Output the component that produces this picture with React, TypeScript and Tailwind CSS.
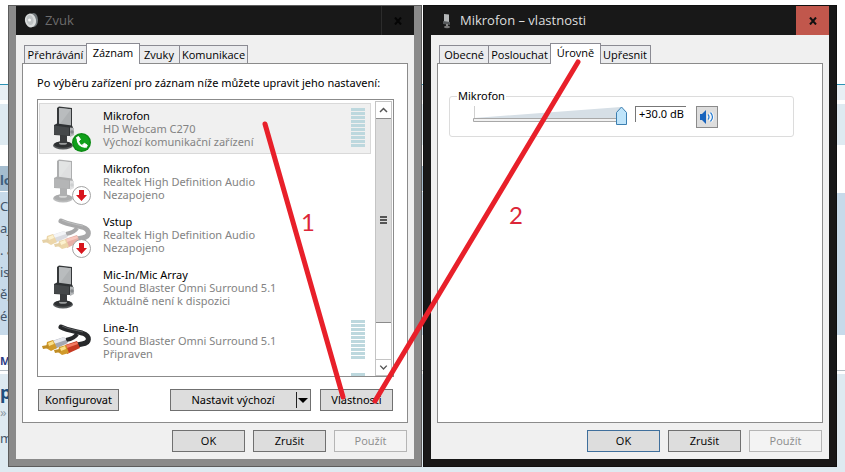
import React from 'react'
import clsx from 'clsx'

type Device = {
    name: string
    driver: string
    status: string
    icon: 'mic' | 'cable'
    badge?: 'phone' | 'down'
    faded?: boolean
    selected?: boolean
    meter?: boolean
}

const devices: Device[] = [
    { name: 'Mikrofon', driver: 'HD Webcam C270', status: 'Výchozí komunikační zařízení', icon: 'mic', badge: 'phone', selected: true, meter: true },
    { name: 'Mikrofon', driver: 'Realtek High Definition Audio', status: 'Nezapojeno', icon: 'mic', badge: 'down', faded: true },
    { name: 'Vstup', driver: 'Realtek High Definition Audio', status: 'Nezapojeno', icon: 'cable', badge: 'down', faded: true },
    { name: 'Mic-In/Mic Array', driver: 'Sound Blaster Omni Surround 5.1', status: 'Aktuálně není k dispozici', icon: 'mic' },
    { name: 'Line-In', driver: 'Sound Blaster Omni Surround 5.1', status: 'Připraven', icon: 'cable', meter: true },
]

const MicDrawing = () => (
    <g>
        <ellipse cx="23" cy="41.500" rx="10" ry="4" fill="#55585a" />
        <ellipse cx="23" cy="40.500" rx="9" ry="3.200" fill="#2e3032" />
        <ellipse cx="23" cy="39.500" rx="4" ry="1.300" fill="#9a9c9d" />
        <path d="M20 31h7v8h-7z" fill="#3a3c3e" />
        <path d="M17 4l2-1.500 13 1.500v21l-2 1-13-2z" fill="#35383a" />
        <path d="M19 4l12 1.200v19l-12-1.700z" fill="#aeb1b3" />
        <path d="M19 4l12 1.200-12 16z" fill="#b9bcbe" />
        <path d="M14 21l3-1.500 15 2 1 2-2 8.500-17-1z" fill="#2f3234" />
        <path d="M14 21.500l15 2v8.500l-15-1.500z" fill="#45484a" />
        <path d="M30 23.500l4 .5v7l-4 2z" fill="#b3b6b8" />
        <circle cx="32" cy="28" r="1.800" fill="#85898c" />
    </g>
)

const CableDrawing = () => (
    <g>
        <path d="M21 11c6 3 13 4 21 6 9 3 8 10 0 11l-5 1" fill="none" stroke="#27292b" strokeWidth="5" strokeLinecap="round" />
        <path d="M37 18c-2 4-6 5-11 6" fill="none" stroke="#27292b" strokeWidth="4" />
        <path d="M22 10c6 3 13 4 21 6" fill="none" stroke="#5b5e60" />
        <path d="M12 25l12-4 4 6-13 6z" fill="#a5a8b2" />
        <path d="M13 25l11-4 2 3-12 4z" fill="#e6e8ee" />
        <path d="M7 26l6-2 4 8-6 3-5-3z" fill="#d19a2a" />
        <path d="M8 27l5-2 1 3-5 2z" fill="#fae08a" />
        <path d="M2 30l6-1 1 3-6 1z" fill="#c08d25" />
        <path d="M25 29l12-4 3 7-13 6z" fill="#c63a22" />
        <path d="M26 29l11-3 1 2-11 4z" fill="#f27b62" />
        <path d="M19 31l7-2 3 8-7 2-4-3z" fill="#d19a2a" />
        <path d="M20 32l5-2 1 3-5 2z" fill="#fae08a" />
        <path d="M14 34l6-1 1 3-6 1z" fill="#c08d25" />
    </g>
)

const DeviceIcon = ({ device }: { device: Device }) => (
    <svg className="h-[49px] w-14 shrink-0" viewBox="0 0 56 49" aria-hidden="true">
        <g opacity={device.faded ? 0.4 : 1}>
            {device.icon === 'mic' ? <MicDrawing /> : <CableDrawing />}
        </g>
        {device.badge === 'phone' && (
            <g>
                <circle cx="41.500" cy="38.500" r="9.500" fill="#0b8a14" />
                <circle cx="41.500" cy="38.500" r="8" fill="#10a01a" />
                <path d="M37.500 34c0 5 3 8.500 8 9" fill="none" stroke="#fff" strokeWidth="2" />
                <path d="M36.500 33.500l2-1 2 3-2 1.800zM42.500 41l1.800-1.800 3 2-1 2.300z" fill="#fff" stroke="#fff" strokeLinejoin="round" />
            </g>
        )}
        {device.badge === 'down' && (
            <g>
                <circle cx="41.500" cy="38.500" r="9" fill="#fff" stroke="#a3a3a3" />
                <path d="M39 33h5v5h3l-5.500 6-5.500-6h3z" fill="#d8151d" />
            </g>
        )}
    </svg>
)

const SpeakerIcon = () => (
    <svg className="h-[18px] w-4" viewBox="0 0 16 18" aria-hidden="true">
        <ellipse cx="9.500" cy="8" rx="4.500" ry="7" fill="#70777a" />
        <ellipse cx="6.500" cy="8.500" rx="5.500" ry="7" fill="#d9dcdc" transform="rotate(-12 6.500 8.500)" />
        <ellipse cx="6" cy="8" rx="3.500" ry="5" fill="#bfc4c5" transform="rotate(-12 6 8)" />
        <circle cx="5.500" cy="8" r="1.500" fill="#f4f4f4" />
    </svg>
)

const SmallMicIcon = () => (
    <svg className="h-[18px] w-4" viewBox="0 0 16 18" aria-hidden="true">
        <path d="M5 2l5 .5v8l-5-.5z" fill="#b4b7b8" />
        <path d="M4 9l7 1v3l-7-1z" fill="#56595b" />
        <path d="M7 12h2v3h-2z" fill="#888" />
        <ellipse cx="8" cy="15" rx="3" ry="1.200" fill="#777" />
    </svg>
)

const Meter = () => (
    <div className="flex w-3.5 flex-col gap-px pt-1">
        {Array.from({ length: 10 }, (_, i) => (
            <span key={i} className="h-[3px] shrink-0 bg-[#bdd8de]" />
        ))}
    </div>
)

const PushButton = ({ children, className, disabled }: { children: React.ReactNode, className?: string, disabled?: boolean }) => (
    <button
        type="button"
        disabled={disabled}
        className={clsx(
            'h-[22px] border text-center leading-4',
            disabled ? 'border-[#b5b5b5] bg-[#f3f3f3] text-[#8c8c8c]' : 'bg-[#dddddd] text-black',
            className,
        )}
    >
        {children}
    </button>
)

const Tab = ({ label, width, selected }: { label: string, width: string, selected?: boolean }) => (
    <button
        type="button"
        role="tab"
        aria-selected={!!selected}
        className={clsx(
            "border border-b-0 border-[#8b8b93] text-center font-['Open_Sans',sans-serif] leading-4 whitespace-nowrap",
            selected ? 'relative -mx-px -mb-px h-[21px] bg-white pb-0.5' : 'h-[18px] bg-[#ebecee] not-first:-ml-px',
            width,
        )}
    >
        {label}
    </button>
)

type DialogProps = {
    title: string
    icon: React.ReactNode
    active?: boolean
    tabs: React.ReactNode
    children: React.ReactNode
}

const Dialog = ({ title, icon, active, tabs, children }: DialogProps) => (
    <section
        aria-label={title}
        className={clsx(
            'flex min-w-0 flex-1 flex-col border px-[7px] pb-[7px]',
            active ? 'border-[#101010] bg-[#181818]' : 'border-[#5c5c5c] bg-[#8a8a8a]',
        )}
    >
        <header className="flex h-[29px] items-center bg-[#181818] pl-2">
            {icon}
            <h1 className={clsx("ml-[5px] flex-1 font-['Open_Sans',sans-serif] text-[13px]", active ? 'text-[#dedede]' : 'text-[#6c6c6c]')}>
                {title}
            </h1>
            <button
                type="button"
                aria-label="Zavřít"
                className={clsx('flex h-full w-[33px] items-center justify-center', active ? 'bg-[#c1574c]' : 'border-l border-[#2c2c2c]')}
            >
                <svg className="size-2" viewBox="0 0 8 8" aria-hidden="true">
                    <path d="M1 .5l6 7M7 .5l-6 7" stroke={active ? '#111' : '#050505'} strokeWidth="2" />
                </svg>
            </button>
        </header>
        <div className="flex flex-1 flex-col bg-[#f0f0f0] px-1.5 pt-2 pb-[7px]">
            <div role="tablist" className="flex h-5 items-end pl-0.5">
                {tabs}
            </div>
            <div className="flex flex-1 flex-col border border-[#8b8b8b] bg-white">
                {children}
            </div>
            <footer className="mt-[7px] flex justify-end gap-2 pr-px font-['Open_Sans',sans-serif]">
                <PushButton className={clsx('w-[73px]', active ? 'border-[#3f6f9c]' : 'border-[#707070]')}>OK</PushButton>
                <PushButton className="w-[73px] border-[#707070]">Zrušit</PushButton>
                <PushButton className="w-[73px]" disabled>Použít</PushButton>
            </footer>
        </div>
    </section>
)

const DeviceRow = ({ device }: { device: Device }) => (
    <li className={clsx('flex h-[51px] shrink-0 border', device.selected ? 'border-[#d9d9d9] bg-[#f0f0f0]' : 'border-transparent')}>
        <DeviceIcon device={device} />
        <div className="ml-[7px] flex-1 pt-[5px] leading-[13px] whitespace-nowrap text-[#838383]">
            <p className="text-black">{device.name}</p>
            <p>{device.driver}</p>
            <p>{device.status}</p>
        </div>
        {device.meter && <div className="pr-[5px]"><Meter /></div>}
    </li>
)

const ScrollBar = () => (
    <div className="mr-px flex w-[17px] flex-col border border-[#c4c4c4] bg-white" aria-hidden="true">
        <svg className="h-4 w-full shrink-0" viewBox="0 0 15 16">
            <path d="M4 10l3.500-3.500L11 10" fill="none" stroke="#555" strokeWidth="1.500" />
        </svg>
        <div className="flex grow-[204] flex-col items-center justify-center gap-px border-y border-[#8b8b8b] bg-[#dcdcdc]">
            <span className="h-0.5 w-[7px] bg-[#555]" />
            <span className="h-0.5 w-[7px] bg-[#555]" />
            <span className="h-0.5 w-[7px] bg-[#555]" />
        </div>
        <div className="grow-[38]" />
        <svg className="h-4 w-full shrink-0 border-t border-[#c4c4c4]" viewBox="0 0 15 16">
            <path d="M4 6l3.500 3.500L11 6" fill="none" stroke="#555" strokeWidth="1.500" />
        </svg>
    </div>
)

const SoundDialog = () => (
    <Dialog
        title="Zvuk"
        icon={<SpeakerIcon />}
        tabs={
            <>
                <Tab label="Přehrávání" width="w-[63px]" />
                <Tab label="Záznam" width="w-[54px]" selected />
                <Tab label="Zvuky" width="w-[42px]" />
                <Tab label="Komunikace" width="w-[69px]" />
            </>
        }
    >
        <div className="flex flex-1 flex-col pt-3 pr-[13px] pb-[11px] pl-3.5">
            <p className="leading-[14px] whitespace-nowrap">
                Po výběru zařízení pro záznam níže můžete upravit jeho nastavení:
            </p>
            <div className="mt-[9px] flex min-h-[270px] flex-1 border border-[#8b8b8b] pt-px">
                <ul className="flex h-0 min-h-full flex-1 flex-col gap-0.5 overflow-hidden pt-0.5 pr-1 pl-px">
                    {devices.map((device, i) => (
                        <DeviceRow key={i} device={device} />
                    ))}
                    <li className="flex justify-end pt-px pr-1.5" aria-hidden="true">
                        <Meter />
                    </li>
                </ul>
                <ScrollBar />
            </div>
            <div className="mt-3 flex px-px">
                <PushButton className="w-[81px] border-[#707070]">Konfigurovat</PushButton>
                <div className="mr-[9px] ml-auto flex w-[141px]">
                    <PushButton className="flex-1 border-r-0 border-[#707070]">Nastavit výchozí</PushButton>
                    <button
                        type="button"
                        aria-label="Další možnosti"
                        className="flex h-[22px] w-4 items-center border border-l-0 border-[#707070] bg-[#dddddd]"
                    >
                        <svg className="h-4 w-3.5" viewBox="0 0 14 16" aria-hidden="true">
                            <path d="M1.500 0v16" stroke="#222" />
                            <path d="M3 6h10l-5 5z" fill="#000" />
                        </svg>
                    </button>
                </div>
                <PushButton className="w-[73px] border-[#707070]">Vlastnosti</PushButton>
            </div>
        </div>
    </Dialog>
)

const PropertiesDialog = () => (
    <Dialog
        active
        title="Mikrofon – vlastnosti"
        icon={<SmallMicIcon />}
        tabs={
            <>
                <Tab label="Obecné" width="w-[50px]" />
                <Tab label="Poslouchat" width="w-[63px]" />
                <Tab label="Úrovně" width="w-[51px]" selected />
                <Tab label="Upřesnit" width="w-[52px]" />
            </>
        }
    >
        <fieldset className="mt-[25px] mr-7 ml-[11px] rounded-[3px] border border-[#dcdcdc] pt-[3px] pb-2 pl-[23px]">
            <legend className="-ml-4 px-px leading-[14px]">
                <label htmlFor="level">Mikrofon</label>
            </legend>
            <div className="flex h-[22px] items-start">
                <div className="relative h-[22px] w-[156px]">
                    <svg className="size-full" viewBox="0 0 156 22" aria-hidden="true">
                        <path d="M1 12L148 1v11z" fill="#d6dfe6" />
                        <path d="M1.500 0v12" stroke="#d0d0d0" />
                        <path d="M.5 12.500h148v3H.5z" fill="#f2f2f2" stroke="#a8a8a8" />
                        <path d="M143.500 18.500v-12l5-5.500 5 5.500v12z" fill="#bfe4fa" stroke="#3c7fb1" />
                    </svg>
                    <input
                        id="level"
                        type="range"
                        min="0"
                        max="30"
                        defaultValue="30"
                        className="absolute inset-0 size-full opacity-0"
                    />
                </div>
                <input
                    type="text"
                    aria-label="Úroveň v decibelech"
                    readOnly
                    value="+30.0 dB"
                    className="ml-1.5 h-4 w-[51px] border-t border-l border-[#777] bg-white pl-[3px]"
                />
                <button
                    type="button"
                    aria-label="Ztlumit"
                    className="ml-2.5 flex size-[22px] items-center justify-center border border-[#8b8b8b] bg-[#dddddd]"
                >
                    <svg className="h-4 w-4" viewBox="0 0 16 16" aria-hidden="true">
                        <path d="M1 5h2l4-4v14l-4-4H1z" fill="#1763bd" />
                        <path d="M9 5.500q2 2.500 0 5M11.500 3.500q4 4.500 0 9" fill="none" stroke="#fff" strokeWidth="3" />
                        <path d="M9 5.500q2 2.500 0 5M11.500 3.500q4 4.500 0 9" fill="none" stroke="#2d7ed0" strokeWidth="1.300" />
                    </svg>
                </button>
            </div>
        </fieldset>
    </Dialog>
)

// the web page that shows around the dialogs
const Backdrop = () => (
    <div className="absolute inset-0 flex flex-col overflow-hidden bg-white font-['Noto_Sans',sans-serif] text-[13px] text-[#44566b]">
        <div className="mt-[84px] h-px shrink-0 bg-[#2b93b5]" />
        <div className="h-[15px] shrink-0 bg-[#e8eff4]" />
        <div className="mt-1 h-[41px] shrink-0 bg-[#deeaf1]" />
        <div className="mt-[21px] flex h-[169px] shrink-0">
            <div className="flex-1 bg-[#c7daea]">
                <p className="h-[26px] border-b border-white bg-[#a5bdcf] leading-7 font-bold text-[#3e5f7d]">lo</p>
                <div className="pt-[3px] leading-[22px]">
                    <p>Co</p>
                    <p>aj</p>
                    <p>. a</p>
                    <p>is</p>
                    <p>ě,</p>
                    <p>én</p>
                </div>
            </div>
            <div className="mt-[27px] flex-1 bg-[#c7daea]" />
        </div>
        <p className="h-[35px] shrink-0 pt-[18px] text-[11px] leading-4 font-bold text-[#2b3d86]">M</p>
        <div className="h-px shrink-0 bg-[#b4bcc2]" />
        <div className="mt-[3px] flex-1 bg-[#deeaf1] pt-1">
            <p className="text-lg leading-7 font-bold text-[#1f4f7d]">p</p>
            <p className="leading-3 text-[#8c9aa6]">»</p>
            <p className="pt-2 leading-6">m</p>
        </div>
    </div>
)

const Annotations = () => (
    <div className="pointer-events-none absolute inset-0 font-['Lato',sans-serif] text-2xl leading-6 text-[#dc2638]">
        <svg className="absolute top-0 left-0 h-[472px] w-[845px]" viewBox="0 0 845 472" aria-hidden="true">
            <path d="M265 124L343 397M578 62L375 401" stroke="#e8202a" strokeWidth="5" strokeLinecap="round" />
        </svg>
        <span className="absolute top-[210px] left-[301px]">1</span>
        <span className="absolute top-[203px] left-[509px]">2</span>
    </div>
)

const App = () => {
    return (
        <div className="relative flex min-h-screen flex-col">
            <Backdrop />
            <main className="relative flex flex-1 gap-px px-2 py-[5px] font-['Noto_Sans',sans-serif] text-[11px] text-black">
                <SoundDialog />
                <PropertiesDialog />
            </main>
            <Annotations />
        </div>
    )
}

export default App
